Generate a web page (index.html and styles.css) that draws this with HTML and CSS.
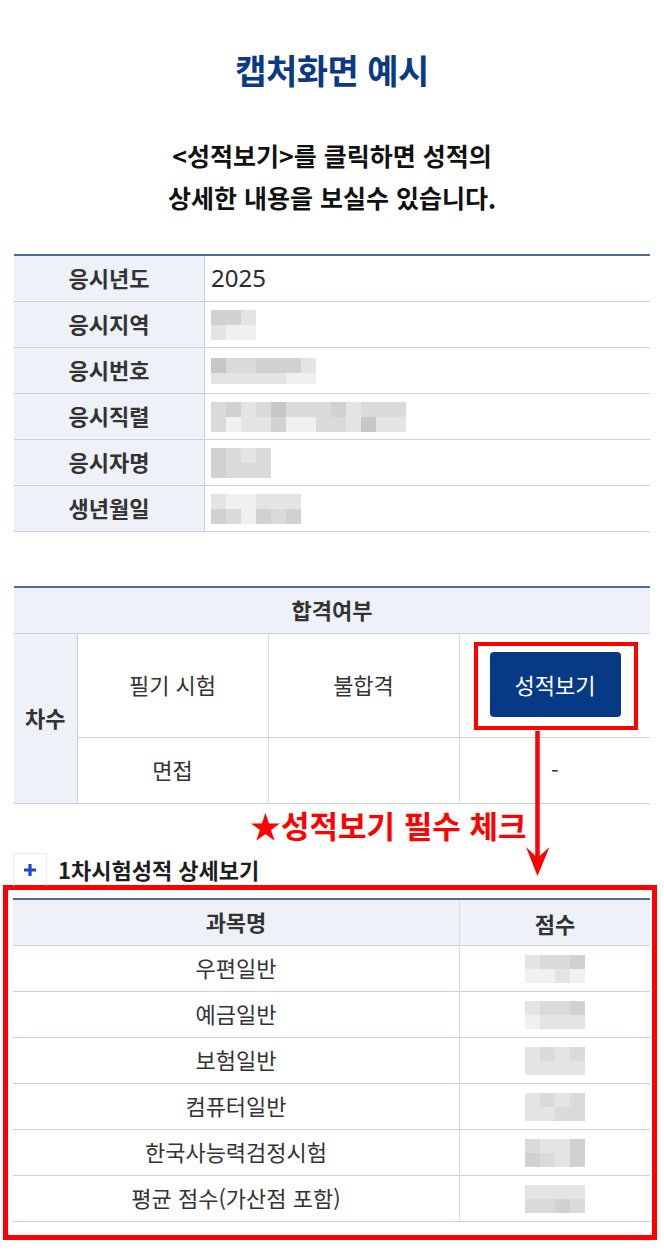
FILE: index.html
```html
<!DOCTYPE html>
<html lang="ko">
<head>
    <meta charset="utf-8">
    <title>캡처화면 예시</title>
    <link rel="stylesheet" href="styles.css">
</head>
<body>
    <div class="page">
        <h1 class="title">캡처화면 예시</h1>
        <p class="lead">&lt;성적보기&gt;를 클릭하면 성적의<br>상세한 내용을 보실수 있습니다.</p>

        <table class="info">
            <tr>
                <th>응시년도</th>
                <td class="year">2025</td>
            </tr>
            <tr>
                <th>응시지역</th>
                <td>
                    <div class="blur c3">
                        <span class="g3"></span><span class="g3"></span><span class="g1"></span>
                        <span class="g1"></span><span class="g0"></span><span class="g0"></span>
                    </div>
                </td>
            </tr>
            <tr>
                <th>응시번호</th>
                <td>
                    <div class="blur c7 short">
                        <span class="g4"></span><span class="g2"></span><span class="g2"></span><span class="g3"></span><span class="g3"></span><span class="g3"></span><span class="g1"></span>
                        <span class="g1"></span><span class="g1"></span><span class="g1"></span><span class="g1"></span><span class="g1"></span><span class="g0"></span><span class="g0"></span>
                    </div>
                </td>
            </tr>
            <tr>
                <th>응시직렬</th>
                <td>
                    <div class="blur c13">
                        <span class="g2"></span><span class="g3"></span><span class="g1"></span><span class="g2"></span><span class="g4"></span><span class="g2"></span><span class="g2"></span><span class="g2"></span><span class="g3"></span><span class="g1"></span><span class="g2"></span><span class="g2"></span><span class="g2"></span>
                        <span class="g2"></span><span class="g0"></span><span class="g1"></span><span class="g1"></span><span class="g3"></span><span class="g0"></span><span class="g0"></span><span class="g2"></span><span class="g2"></span><span class="g1"></span><span class="g4"></span><span class="g1"></span><span class="g1"></span>
                    </div>
                </td>
            </tr>
            <tr>
                <th>응시자명</th>
                <td>
                    <div class="blur c4">
                        <span class="g3"></span><span class="g2"></span><span class="g1"></span><span class="g2"></span>
                        <span class="g3"></span><span class="g2"></span><span class="g2"></span><span class="g2"></span>
                    </div>
                </td>
            </tr>
            <tr>
                <th>생년월일</th>
                <td>
                    <div class="blur c6">
                        <span class="g1"></span><span class="g0"></span><span class="g0"></span><span class="g1"></span><span class="g1"></span><span class="g1"></span>
                        <span class="g3"></span><span class="g2"></span><span class="g0"></span><span class="g3"></span><span class="g2"></span><span class="g3"></span>
                    </div>
                </td>
            </tr>
        </table>

        <table class="result">
            <colgroup>
                <col class="col-round">
                <col class="col-wide">
                <col class="col-wide">
                <col class="col-wide">
            </colgroup>
            <tr>
                <th colspan="4">합격여부</th>
            </tr>
            <tr>
                <th rowspan="2" class="round">차수</th>
                <td>필기 시험</td>
                <td>불합격</td>
                <td class="btn-cell">
                    <div class="mark">
                        <button class="score-btn">성적보기</button>
                    </div>
                </td>
            </tr>
            <tr class="low">
                <td>면접</td>
                <td></td>
                <td>-</td>
            </tr>
        </table>

        <div class="note">★성적보기 필수 체크</div>

        <div class="detail-head">
            <span class="plus-box">
                <svg width="12" height="12" viewBox="0 0 12 12"><path d="M6 0v12M0 6h12" stroke="#2443d4" stroke-width="3.2"/></svg>
            </span>
            1차시험성적 상세보기
        </div>

        <div class="mark-box">
            <table class="score">
                <tr>
                    <th>과목명</th>
                    <th class="pts">점수</th>
                </tr>
                <tr>
                    <td>우편일반</td>
                    <td class="pts"><div class="blur c4 thin"><span class="g1"></span><span class="g2"></span><span class="g2"></span><span class="g3"></span><span class="g0"></span><span class="g0"></span><span class="g1"></span><span class="g0"></span></div></td>
                </tr>
                <tr>
                    <td>예금일반</td>
                    <td class="pts"><div class="blur c4 thin"><span class="g1"></span><span class="g2"></span><span class="g2"></span><span class="g3"></span><span class="g0"></span><span class="g1"></span><span class="g1"></span><span class="g1"></span></div></td>
                </tr>
                <tr>
                    <td>보험일반</td>
                    <td class="pts"><div class="blur c4 thin"><span class="g1"></span><span class="g2"></span><span class="g1"></span><span class="g2"></span><span class="g1"></span><span class="g1"></span><span class="g1"></span><span class="g1"></span></div></td>
                </tr>
                <tr>
                    <td>컴퓨터일반</td>
                    <td class="pts"><div class="blur c4 thin"><span class="g1"></span><span class="g2"></span><span class="g1"></span><span class="g2"></span><span class="g1"></span><span class="g1"></span><span class="g2"></span><span class="g2"></span></div></td>
                </tr>
                <tr>
                    <td>한국사능력검정시험</td>
                    <td class="pts"><div class="blur c4 thin"><span class="g2"></span><span class="g1"></span><span class="g1"></span><span class="g3"></span><span class="g3"></span><span class="g2"></span><span class="g1"></span><span class="g3"></span></div></td>
                </tr>
                <tr>
                    <td>평균 점수(가산점 포함)</td>
                    <td class="pts"><div class="blur c4 thin"><span class="g1"></span><span class="g1"></span><span class="g1"></span><span class="g1"></span><span class="g2"></span><span class="g2"></span><span class="g3"></span><span class="g2"></span></div></td>
                </tr>
            </table>
        </div>

        <svg class="arrow" width="28" height="146" viewBox="0 0 28 146">
            <path d="M13.5 0V130" stroke="#f00" stroke-width="4.5"/>
            <path d="M13.5 145L2 116L13.5 127L25.5 116Z" fill="#f00"/>
        </svg>
    </div>
</body>
</html>
```

FILE: styles.css
```css
body {
    margin: 0;
    background: #ffffff;
    font-family: "Noto Sans CJK KR", "Noto Sans", sans-serif;
    color: #333333;
}
.page {
    position: relative;
    width: 636px;
    padding: 0 14px 9px;
}
.title {
    margin: 0;
    padding-top: 48px;
    font-size: 34px;
    line-height: 44px;
    letter-spacing: -0.5px;
    text-align: center;
    color: #0b3a84;
}
.lead {
    margin: 42px 0 0;
    font-size: 25px;
    line-height: 42px;
    font-weight: bold;
    text-align: center;
    color: #111111;
}

/* tables */
table {
    width: 100%;
    border-collapse: collapse;
    border-top: 2px solid #4f6d94;
}
th {
    background: #eef2f8;
    font-size: 22px;
    font-weight: bold;
    color: #333333;
    padding: 0 0 4px;
}
td {
    padding: 0 0 4px;
    font-size: 22px;
    color: #333333;
}
.info {
    margin-top: 36px;
}
.info th {
    width: 190px;
    height: 41px;
    border-bottom: 1px solid #c8d2de;
    border-right: 1px solid #c8d2de;
}
.info td {
    padding: 0 0 0 6px;
    border-bottom: 1px solid #c8d2de;
}
.info .year {
    padding-bottom: 3px;
    font-size: 24px;
    font-family: "Noto Sans", sans-serif;
    color: #2b2b2b;
}

.result {
    margin-top: 54px;
    table-layout: fixed;
}
.col-round {
    width: 63px;
}
.col-wide {
    width: 191px;
}
.result th {
    height: 41px;
    border-bottom: 1px solid #c8d2de;
}
.result th.round {
    border-right: 1px solid #c8d2de;
}
.result td {
    text-align: center;
    border-right: 1px solid #d3dbe5;
    border-bottom: 1px solid #c8d2de;
}
.result td:last-child {
    border-right: none;
}
.result .low td {
    height: 61px;
}
.result .btn-cell {
    padding: 8px 12px 7px 14px;
}
.mark {
    border: 4px solid #ff0000;
    padding: 6px 13px 9px 12px;
}
.score-btn {
    display: block;
    width: 131px;
    height: 65px;
    padding-bottom: 3px;
    border: none;
    border-radius: 4px;
    background: #063a84;
    color: #ffffff;
    font-family: inherit;
    font-size: 22px;
}

.note {
    margin-top: 3px;
    padding-left: 236px;
    font-size: 31px;
    line-height: 36px;
    font-weight: bold;
    color: #ff0000;
}

.detail-head {
    display: flex;
    align-items: center;
    gap: 11px;
    margin-top: 10px;
    height: 32px;
    font-size: 22px;
    font-weight: bold;
    color: #1e1e1e;
}
.plus-box {
    display: flex;
    align-items: center;
    justify-content: center;
    width: 32px;
    height: 32px;
    border: 1px solid #ececec;
    border-bottom: none;
    margin-left: -1px;
}

.mark-box {
    margin: 0 -7px 0 -11px;
    border: 5px solid #ff0000;
    padding: 8px 2px 13px 5px;
}
.score th {
    height: 41px;
    border-bottom: 1px solid #c8d2de;
}
.score td {
    height: 41px;
    text-align: center;
    border-bottom: 1px solid #c8d2de;
}
.score .pts {
    width: 190px;
    padding-bottom: 0;
    border-left: 1px solid #d3dbe5;
}

/* pixelated placeholders */
.blur {
    display: grid;
    grid-auto-rows: 15px;
}
.blur.short {
    grid-template-rows: 15px 11px;
}
.blur.thin {
    grid-auto-rows: 14px;
    margin: 0 auto;
}
.c3 { grid-template-columns: repeat(3, 15px); }
.c4 { grid-template-columns: repeat(4, 15px); }
.c6 { grid-template-columns: repeat(6, 15px); }
.c7 { grid-template-columns: repeat(7, 15px); }
.c13 { grid-template-columns: repeat(13, 15px); }
.c4.thin { width: 60px; }
.g0 { background: #f0f0f0; }
.g1 { background: #e4e4e4; }
.g2 { background: #dadada; }
.g3 { background: #d1d1d1; }
.g4 { background: #c7c7c7; }

.arrow {
    position: absolute;
    left: 524px;
    top: 731px;
}
```
